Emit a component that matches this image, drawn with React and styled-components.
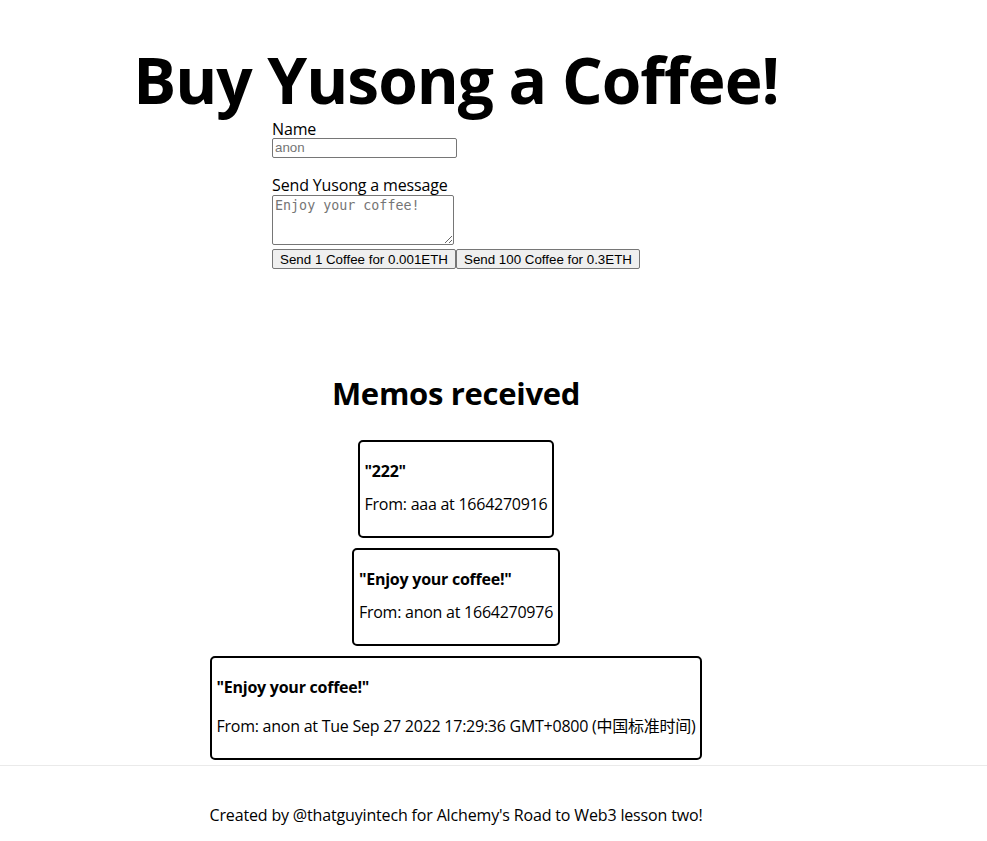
import React from 'react';
import styled, { createGlobalStyle } from 'styled-components';

const GlobalStyle = createGlobalStyle`
  html, body {
    margin: 0;
    padding: 0;
    background: #fff;
    color: #000;
    font-family: "Open Sans", "Noto Sans", "Noto Sans CJK SC", sans-serif;
  }
  * {
    box-sizing: border-box;
  }
`;

const memos = [
  { id: 1, message: '222', name: 'aaa', timestamp: '1664270916' },
  { id: 2, message: 'Enjoy your coffee!', name: 'anon', timestamp: '1664270976' },
  {
    id: 3,
    message: 'Enjoy your coffee!',
    name: 'anon',
    timestamp: 'Tue Sep 27 2022 17:29:36 GMT+0800 (中国标准时间)',
    tall: true,
  },
];

const Container = styled.div`
  display: flex;
  flex-direction: column;
  min-height: 100vh;
`;

const Main = styled.main`
  width: 912px;
  padding-top: 43px;
  display: flex;
  flex-direction: column;
  align-items: center;
`;

const Title = styled.h1`
  margin: 0;
  font-size: 64px;
  line-height: 1.15;
  font-weight: 700;
  letter-spacing: -1px;
`;

const Form = styled.form`
  display: flex;
  flex-direction: column;
  align-items: flex-start;
  margin-top: 3px;
`;

const Label = styled.label`
  display: block;
  font-size: 16px;
  line-height: 1.15;
  letter-spacing: -0.16px;
  margin-top: ${({ $spaced }) => ($spaced ? '18px' : '0')};
`;

const TextInput = styled.input`
  width: 185px;
  height: 20px;
  margin: 0;
  padding: 1px 2px;
  border: 1px solid #767676;
  border-radius: 2px;
  font-family: "Liberation Sans", Arial, sans-serif;
  font-size: 13.333px;

  &::placeholder {
    color: #757575;
  }
`;

const MessageInput = styled.textarea`
  display: block;
  width: 182px;
  height: 50px;
  margin: 1px 0 0;
  padding: 2px;
  border: 1px solid #767676;
  border-radius: 2px;
  font-family: "DejaVu Sans Mono", monospace;
  font-size: 13.333px;

  &::placeholder {
    color: #757575;
  }
`;

const ButtonRow = styled.div`
  display: flex;
  margin-top: 4px;
`;

const Button = styled.button`
  height: 20px;
  margin: 0;
  padding: 1px 7px;
  background: #efefef;
  border: 1px solid #767676;
  border-radius: 2px;
  color: #000;
  font-family: "Liberation Sans", Arial, sans-serif;
  font-size: 13.333px;
  line-height: 1;
`;

const MemosTitle = styled.h1`
  margin: 107px 0 23px;
  font-size: 31px;
  line-height: 1.15;
  font-weight: 700;
  letter-spacing: -0.3px;
`;

const MemoCard = styled.div`
  margin: 5px;
  padding: 5px;
  border: 2px solid #000;
  border-radius: 5px;
`;

const MemoMessage = styled.p`
  margin: 15px 0 15px;
  font-size: 16px;
  line-height: 1.15;
  font-weight: 700;
  letter-spacing: -0.25px;
`;

const MemoFrom = styled.p`
  margin: ${({ $tall }) => ($tall ? '18px 0 14px' : '0 0 17px')};
  font-size: 16px;
  line-height: ${({ $tall }) => ($tall ? '25px' : '1.15')};
  letter-spacing: -0.25px;
`;

const Footer = styled.footer`
  display: flex;
  height: 100px;
  border-top: 1px solid #eaeaea;
`;

const FooterText = styled.div`
  width: 912px;
  display: flex;
  align-items: center;
  justify-content: center;
  font-size: 16px;
  letter-spacing: -0.16px;
`;

const App = () => (
  <>
    <GlobalStyle />
    <Container>
      <Main>
        <Title>Buy Yusong a Coffee!</Title>

        <Form onSubmit={(e) => e.preventDefault()}>
          <Label htmlFor="name">Name</Label>
          <TextInput id="name" type="text" placeholder="anon" />

          <Label htmlFor="message" $spaced>
            Send Yusong a message
          </Label>
          <MessageInput id="message" placeholder="Enjoy your coffee!" />

          <ButtonRow>
            <Button type="button">Send 1 Coffee for 0.001ETH</Button>
            <Button type="button">Send 100 Coffee for 0.3ETH</Button>
          </ButtonRow>
        </Form>

        <MemosTitle>Memos received</MemosTitle>

        {memos.map((memo) => (
          <MemoCard key={memo.id}>
            <MemoMessage>"{memo.message}"</MemoMessage>
            <MemoFrom $tall={memo.tall}>
              From: {memo.name} at {memo.timestamp}
            </MemoFrom>
          </MemoCard>
        ))}
      </Main>

      <Footer>
        <FooterText>Created by @thatguyintech for Alchemy's Road to Web3 lesson two!</FooterText>
      </Footer>
    </Container>
  </>
);

export default App;
